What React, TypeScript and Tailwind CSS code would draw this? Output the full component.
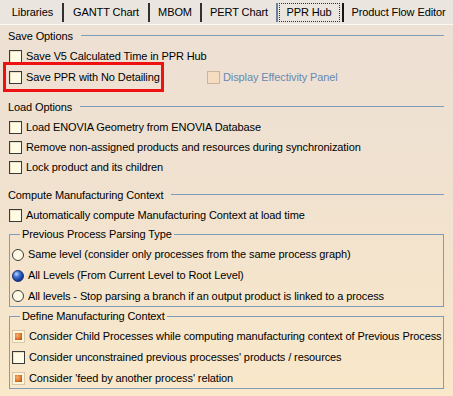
import React from "react";

const font = { fontFamily: '"Liberation Sans", Arial, sans-serif', letterSpacing: "-0.1px" };

function Check({ state = "off" }: { state?: "off" | "on" | "disabled" }) {
  if (state === "on")
    return (
      <span className="inline-block w-[13px] h-[13px] shrink-0 border border-[#d8c8a8] bg-[#fff4dc] p-[2px]">
        <span className="block w-full h-full bg-[radial-gradient(circle_at_35%_35%,#f8b070,#d0661c_70%,#a04810)]" />
      </span>
    );
  if (state === "disabled")
    return <span className="inline-block w-[13px] h-[13px] shrink-0 border border-[#c9b49e] bg-[#f6dcc0]" />;
  return (
    <span className="inline-block w-[13px] h-[13px] shrink-0 border border-[#3a3a3a] bg-[#fffbe4] shadow-[inset_1px_1px_0_#e8e0c0]" />
  );
}

function Radio({ on = false }: { on?: boolean }) {
  if (on)
    return (
      <span className="inline-block w-[12px] h-[12px] shrink-0 rounded-full border border-[#1a2f6a] bg-[radial-gradient(circle_at_35%_30%,#b8d4ff_0%,#3a70d0_35%,#0c2e8a_80%)]" />
    );
  return (
    <span className="inline-block w-[12px] h-[12px] shrink-0 rounded-full border border-[#3a3a3a] bg-[#fffbe4]" />
  );
}

function Row({ children, icon, className = "h-[21px]" }: { children: React.ReactNode; icon: React.ReactNode; className?: string }) {
  return (
    <div className={"flex items-center gap-[4px] " + className}>
      {icon}
      <span className="whitespace-nowrap">{children}</span>
    </div>
  );
}

function Header({ title, className = "" }: { title: string; className?: string }) {
  return (
    <div className={"flex items-center h-[20px] pl-[8px] pr-[9px] " + className}>
      <span className="whitespace-nowrap">{title}</span>
      <span className="flex-1 h-[1px] bg-[#7f9db9] ml-[8px] mt-[-2px]" />
    </div>
  );
}

const tabs: { t: string; w: string; b: string }[] = [
  { t: "Libraries", w: "w-[61px]", b: "border-r-2 border-[#303030]" },
  { t: "GANTT Chart", w: "w-[86px]", b: "border-r-2 border-[#303030]" },
  { t: "MBOM", w: "w-[52px]", b: "border-r-2 border-[#303030]" },
  { t: "PERT Chart", w: "w-[76px]", b: "border-r-2 border-[#6a7ea0]" },
  { t: "PPR Hub", w: "w-[66px]", b: "border-r-2 border-[#141414]" },
  { t: "Product Flow Editor", w: "flex-1", b: "" },
];

export default function App() {
  return (
    <div
      style={font}
      className="relative w-[453px] h-[396px] overflow-hidden text-[11px] text-black bg-[linear-gradient(180deg,#ece0d5_0%,#f1e2cf_50%,#f9e8c9_100%)] flex flex-col"
    >
      <div className="h-[25px] shrink-0 flex items-stretch bg-[#ebe5df] border-b border-[#fbf8f4] pt-[3px] pb-[2px] pl-[3px]">
        {tabs.map((tab, i) => (
          <div key={tab.t} className={"flex items-stretch justify-center " + tab.w + " " + tab.b}>
            {i === 4 ? (
              <span className="flex items-center justify-center w-[61px] mr-[2px] border border-dotted border-[#6a1a10] whitespace-nowrap">
                {tab.t}
              </span>
            ) : (
              <span className="flex items-center whitespace-nowrap">{tab.t}</span>
            )}
          </div>
        ))}
      </div>

      <div className="flex flex-col pt-[1px]">
        <Header title="Save Options" />
        <div className="pl-[9px]">
          <Row icon={<Check />} className="h-[20px]">Save V5 Calculated Time in PPR Hub</Row>
          <div className="flex items-center h-[23px]">
            <div className="flex items-center gap-[4px] w-[198px]">
              <Check />
              <span className="whitespace-nowrap">Save PPR with No Detailing</span>
            </div>
            <div className="flex items-center gap-[3px]">
              <Check state="disabled" />
              <span className="whitespace-nowrap text-[#6889b2]">Display Effectivity Panel</span>
            </div>
          </div>
        </div>
        <Header title="Load Options" className="mt-[8px]" />
        <div className="pl-[9px]">
          <Row icon={<Check />} className="h-[20px]">Load ENOVIA Geometry from ENOVIA Database</Row>
          <Row icon={<Check />} className="h-[20px]">Remove non-assigned products and resources during synchronization</Row>
          <Row icon={<Check />} className="h-[21px]">Lock product and its children</Row>
        </div>
        <Header title="Compute Manufacturing Context" className="mt-[7px]" />
        <div className="pl-[9px]">
          <Row icon={<Check />} className="h-[20px]">Automatically compute Manufacturing Context at load time</Row>
        </div>

        <fieldset className="ml-[9px] mr-[9px] mt-[3px] border border-[#7f9db9] pl-[2px] pt-[3px]">
          <legend className="ml-[8px] px-[2px] leading-[13px]">Previous Process Parsing Type</legend>
          <Row icon={<Radio />}>Same level (consider only processes from the same process graph)</Row>
          <Row icon={<Radio on />}>All Levels (From Current Level to Root Level)</Row>
          <Row icon={<Radio />} className="h-[20px]">All levels - Stop parsing a branch if an output product is linked to a process</Row>
        </fieldset>

        <fieldset className="ml-[9px] mr-[9px] mt-[3px] border border-[#7f9db9] pl-[2px] pt-[3px]">
          <legend className="ml-[8px] px-[2px] leading-[13px]">Define Manufacturing Context</legend>
          <Row icon={<Check state="on" />}>Consider Child Processes while computing manufacturing context of Previous Process</Row>
          <Row icon={<Check />}>Consider unconstrained previous processes' products / resources</Row>
          <Row icon={<Check state="on" />} className="h-[20px]">Consider 'feed by another process' relation</Row>
        </fieldset>
      </div>

      <div className="absolute left-[3px] top-[62px] w-[161px] h-[30px] border-[3px] border-[#ee1111] pointer-events-none" />
    </div>
  );
}
